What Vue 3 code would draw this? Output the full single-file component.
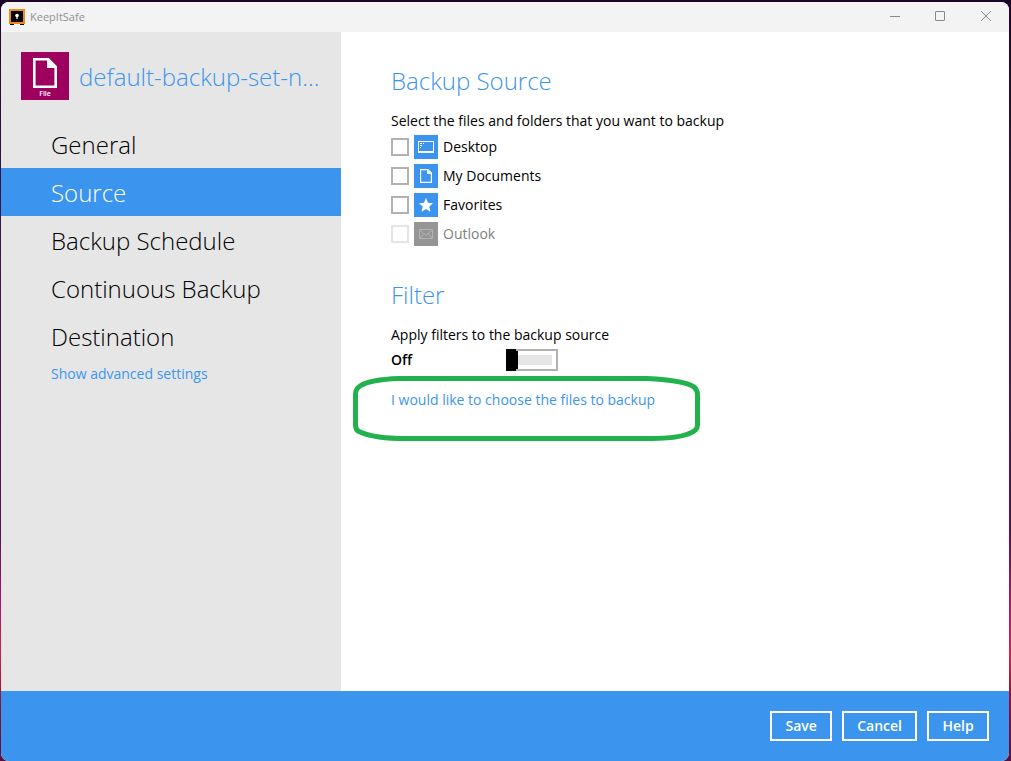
<script setup>
import { ref } from 'vue'

const sections = ['General', 'Source', 'Backup Schedule', 'Continuous Backup', 'Destination']
const current = ref('Source')

const folders = ref([
  { id: 'desktop', label: 'Desktop', checked: false },
  { id: 'documents', label: 'My Documents', checked: false },
  { id: 'favorites', label: 'Favorites', checked: false },
  { id: 'outlook', label: 'Outlook', checked: false, disabled: true },
])
const filterOn = ref(false)
</script>

<template>
  <div class="desktop">
    <div class="window">
      <header class="titlebar">
        <svg class="app-icon" width="16" height="16" viewBox="0 0 16 16" aria-hidden="true">
          <path d="M1 14h4v2H1zM11 14h4v2h-4z" fill="#000" />
          <rect width="16" height="15" fill="#ef8a1d" />
          <rect x="2" y="2" width="12" height="11" fill="#000" />
          <circle cx="8" cy="6.5" r="1.8" fill="#fff" />
          <path d="M7.4 7h1.2v3H7.4z" fill="#fff" />
        </svg>
        <span class="app-name">KeepItSafe</span>
        <div class="controls">
          <button type="button" aria-label="Minimize">
            <svg width="12" height="12" viewBox="0 0 12 12"><path d="M2 5.5h10" /></svg>
          </button>
          <button type="button" aria-label="Maximize">
            <svg width="12" height="12" viewBox="0 0 12 12"><rect x="1.5" y="0.5" width="9" height="9" rx="0.5" /></svg>
          </button>
          <button type="button" aria-label="Close">
            <svg width="12" height="12" viewBox="0 0 12 12"><path d="M1 0l10 10M11 0L1 10" /></svg>
          </button>
        </div>
      </header>

      <div class="body">
        <aside class="sidebar">
          <div class="set">
            <div class="set-icon">
              <svg width="24" height="30" viewBox="0 0 24 30" aria-hidden="true">
                <path d="M1.300 1.300h14l7.400 7.400v20h-21.400z" fill="none" stroke="#fff" stroke-width="2.6" />
                <path d="M14 1h2l7 7v2h-9z" fill="#fff" />
              </svg>
              <span>File</span>
            </div>
            <h1>default-backup-set-n...</h1>
          </div>
          <nav>
            <button
              v-for="s in sections"
              :key="s"
              type="button"
              class="nav-item"
              :class="{ active: s === current }"
              @click="current = s"
            >{{ s }}</button>
          </nav>
          <a class="advanced" href="#advanced">Show advanced settings</a>
        </aside>

        <main>
          <section class="source">
            <h2>Backup Source</h2>
            <p>Select the files and folders that you want to backup</p>
            <ul>
              <li v-for="f in folders" :key="f.id">
                <label class="folder" :class="{ disabled: f.disabled }">
                  <input v-model="f.checked" type="checkbox" :disabled="f.disabled" />
                  <svg class="folder-icon" width="24" height="24" viewBox="0 0 24 24" aria-hidden="true">
                    <g v-if="f.id === 'desktop'">
                      <path d="M4 6h16v12H4zM5 7v9h14V7z" fill="#fff" fill-rule="evenodd" />
                      <path d="M6 8h2v1H6zM9 8h1v1H9zM6 10h2v1H6zM6 12h1v1H6z" fill="#fff" />
                    </g>
                    <g v-else-if="f.id === 'documents'">
                      <path d="M6.600 5.600h7.400l3.400 3.400v9.400H6.600z" fill="none" stroke="#fff" stroke-width="1.2" />
                      <path d="M13 5.500v4.500h4.500z" fill="#fff" />
                    </g>
                    <path
                      v-else-if="f.id === 'favorites'"
                      d="M12 5l2 4.700 5 .5-3.700 3.400 1.100 5.100-4.400-2.700-4.400 2.700 1.100-5.100L5 10.200l5-.5z"
                      fill="#fff"
                    />
                    <path
                      v-else
                      d="M5.500 7.500h13v9h-13zM5.500 7.500l6.500 6 6.500-6M5.500 16.500l4.500-5M18.500 16.500l-4.500-5"
                      fill="none"
                      stroke="#b2b2b2"
                    />
                  </svg>
                  <span>{{ f.label }}</span>
                </label>
              </li>
            </ul>
          </section>

          <section class="filter">
            <h2>Filter</h2>
            <p id="filter-label">Apply filters to the backup source</p>
            <div class="switch-row">
              <span class="state">{{ filterOn ? 'On' : 'Off' }}</span>
              <input v-model="filterOn" class="switch" type="checkbox" role="switch" aria-labelledby="filter-label" />
            </div>
          </section>

          <div class="choose">
            <a href="#choose">I would like to choose the files to backup</a>
            <svg class="marker" width="348" height="66" viewBox="0 0 348 66" aria-hidden="true">
              <path
                d="M46 3.500H294Q332 5.500 341 12Q344.500 15 344.500 20V50Q344.500 56 335 59Q323 63.500 300 63.500H45Q17 62.500 5 56Q2.500 54 2.500 50V19Q2.500 14 7 11Q17 4.500 46 3.500Z"
                fill="none"
                stroke="#22b14c"
                stroke-width="5"
              />
            </svg>
          </div>
        </main>
      </div>

      <footer>
        <button type="button">Save</button>
        <button type="button">Cancel</button>
        <button type="button">Help</button>
      </footer>
    </div>
  </div>
</template>

<style>
body {
  margin: 0;
}
</style>

<style scoped>
* {
  box-sizing: border-box;
}
.desktop {
  min-height: 100vh;
  display: flex;
  padding: 2px 2px 0 1px;
  background: linear-gradient(#1c0628 0, #3c1848 30%, #5a1058 70%, #b0186c 80%, #d42050 86%, #8c1434 92%, #5a1040 100%);
  font-family: "Open Sans", "Noto Sans", sans-serif;
  font-size: 14px;
  line-height: 20px;
  color: #000;
}
.window {
  flex: 1;
  min-width: 0;
  display: flex;
  flex-direction: column;
  border-radius: 8px;
  overflow: hidden;
  background: #fff;
}
button {
  font: inherit;
  cursor: pointer;
}
a {
  color: #3b95ee;
  text-decoration: none;
}
.titlebar {
  height: 30px;
  display: flex;
  align-items: center;
  padding-left: 8px;
  background: #f3f3f3;
}
.app-name {
  margin-left: 5px;
  font-size: 11px;
  color: #919191;
}
.controls {
  display: flex;
  margin-left: auto;
}
.controls button {
  width: 46px;
  height: 30px;
  display: grid;
  place-items: center;
  padding: 0;
  border: 0;
  background: none;
}
.controls svg {
  fill: none;
  stroke: #8a8a8a;
}
.body {
  flex: 1;
  display: flex;
}
.sidebar {
  width: 340px;
  flex: none;
  background: #e6e6e6;
}
.set {
  display: flex;
  align-items: center;
  gap: 10px;
  padding: 20px 0 20px 20px;
}
.set-icon {
  width: 48px;
  height: 48px;
  flex: none;
  display: flex;
  flex-direction: column;
  align-items: center;
  padding-top: 6px;
  background: #9e005d;
  color: #fff;
  font-size: 7px;
  font-weight: 600;
  line-height: 12px;
}
h1,
h2 {
  margin: 0;
  font-size: 24px;
  font-weight: 300;
  line-height: 32px;
  color: #3b95ee;
}
h1 {
  padding-top: 2px;
  white-space: nowrap;
}
.nav-item {
  display: block;
  width: 100%;
  height: 48px;
  padding: 2px 0 0 50px;
  border: 0;
  background: none;
  color: #000;
  font-size: 24px;
  font-weight: 300;
  text-align: left;
}
.nav-item.active {
  background: #3b95ee;
  color: #fff;
}
.advanced {
  display: block;
  margin: 4px 0 0 50px;
}
main {
  flex: 1;
  padding: 33px 50px;
}
h2 {
  margin-bottom: 14px;
}
p {
  margin: 0;
}
ul {
  margin: 4px 0 0;
  padding: 0;
  list-style: none;
  display: grid;
  gap: 5px;
}
.folder {
  display: flex;
  align-items: center;
  gap: 5px;
}
.folder input {
  appearance: none;
  width: 18px;
  height: 18px;
  margin: 0;
  border: 2px solid #b2b2b2;
  background: #fff;
}
.folder input:checked {
  background: #3b95ee;
}
.folder-icon {
  background: #3b95ee;
}
.disabled {
  color: #808080;
}
.disabled input {
  border-color: #e5e5e5;
}
.disabled .folder-icon {
  background: #959595;
}
.filter {
  margin-top: 33px;
}
.switch-row {
  display: flex;
  align-items: center;
  margin-top: 4px;
}
.state {
  width: 115px;
  font-weight: 600;
}
.switch {
  appearance: none;
  width: 52px;
  height: 22px;
  margin: 0;
  padding: 4px;
  border: 2px solid #b2b2b2;
  background:
    linear-gradient(#000, #000) left / 12px 100% no-repeat border-box,
    linear-gradient(#e5e5e5, #e5e5e5) content-box;
  border-left-width: 0;
  box-shadow: inset 12px 0 #000;
  border-image: linear-gradient(90deg, #000 12px, #b2b2b2 12px) 2;
}
.switch:checked {
  background: linear-gradient(#3b95ee, #3b95ee) content-box;
  box-shadow: inset -12px 0 #000;
}
.choose {
  position: relative;
  width: max-content;
  margin-top: 19px;
}
.marker {
  position: absolute;
  left: -38px;
  top: -15px;
  pointer-events: none;
}
footer {
  display: flex;
  justify-content: flex-end;
  gap: 10px;
  padding: 20px;
  background: #3b95ee;
}
footer button {
  min-width: 62px;
  height: 30px;
  padding: 0 13px;
  border: 2px solid #fff;
  background: none;
  color: #fff;
  font-weight: 600;
}
</style>
